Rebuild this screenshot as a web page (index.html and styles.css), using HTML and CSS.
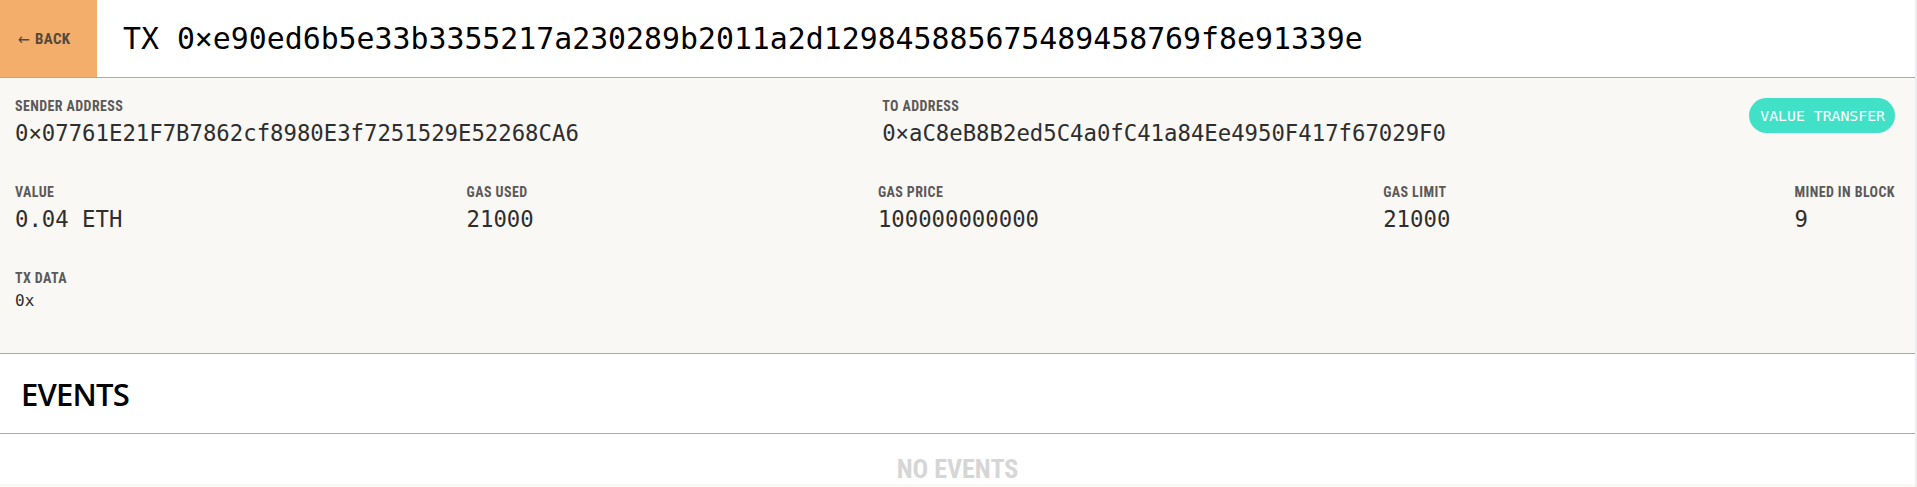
FILE: index.html
```html
<!DOCTYPE html>
<html lang="en">
<head>
<meta charset="utf-8">
<title>Transaction</title>
<link rel="stylesheet" href="styles.css">
</head>
<body>
<div class="app">
  <main class="page">
    <header class="topbar">
      <button class="back"><span class="arrow">←</span><span class="back-text">BACK</span></button>
      <h1 class="tx-title">TX 0×e90ed6b5e33b3355217a230289b2011a2d129845885675489458769f8e91339e</h1>
    </header>

    <section class="details">
      <div class="row">
        <div class="field">
          <div class="label">SENDER ADDRESS</div>
          <div class="value">0×07761E21F7B7862cf8980E3f7251529E52268CA6</div>
        </div>
        <div class="field">
          <div class="label">TO ADDRESS</div>
          <div class="value">0×aC8eB8B2ed5C4a0fC41a84Ee4950F417f67029F0</div>
        </div>
        <div class="badge">VALUE TRANSFER</div>
      </div>
      <div class="row">
        <div class="field">
          <div class="label">VALUE</div>
          <div class="value">0.04 ETH</div>
        </div>
        <div class="field">
          <div class="label">GAS USED</div>
          <div class="value">21000</div>
        </div>
        <div class="field">
          <div class="label">GAS PRICE</div>
          <div class="value">100000000000</div>
        </div>
        <div class="field">
          <div class="label">GAS LIMIT</div>
          <div class="value">21000</div>
        </div>
        <div class="field">
          <div class="label">MINED IN BLOCK</div>
          <div class="value">9</div>
        </div>
      </div>
      <div class="row">
        <div class="field">
          <div class="label">TX DATA</div>
          <div class="value small">0x</div>
        </div>
      </div>
    </section>

    <section class="events-head">
      <h2>EVENTS</h2>
    </section>
    <section class="events-list">
      <div class="empty">NO EVENTS</div>
    </section>
  </main>
  <div class="scrollbar"></div>
</div>
</body>
</html>
```

FILE: styles.css
```css
* { box-sizing: border-box; }

html, body {
  margin: 0;
  padding: 0;
  height: 100%;
}

body {
  background: #faf8f5;
  font-family: Roboto, "Liberation Sans", Arial, sans-serif;
  overflow: hidden;
}

.app {
  display: flex;
  min-height: 100%;
}

.page {
  flex: 1;
  min-width: 0;
  background: #faf8f5;
}

.scrollbar {
  width: 2px;
  background: #eeedf3;
}

/* Header */
.topbar {
  display: flex;
  align-items: center;
  height: 78px;
  background: #ffffff;
  border-bottom: 1px solid #aaaaaa;
}

.back {
  display: flex;
  align-items: center;
  gap: 5px;
  width: 97px;
  height: 100%;
  margin: 0;
  padding: 0 0 0 18px;
  border: 0;
  background: #f2ae6a;
  color: #55483c;
  font-family: Roboto, "Liberation Sans", Arial, sans-serif;
  font-stretch: 75%;
  font-weight: bold;
  font-size: 15px;
}

.back .arrow {
  font-family: "DejaVu Sans", sans-serif;
  font-weight: normal;
  font-size: 16px;
  position: relative;
  top: 1px;
}

.back-text {
  letter-spacing: 0.3px;
}

.tx-title {
  margin: 0 0 0 26px;
  font-family: "DejaVu Sans Mono", monospace;
  font-weight: normal;
  font-size: 29.85px;
  line-height: 36px;
  color: #000000;
  white-space: nowrap;
}

/* Details */
.details {
  display: flex;
  flex-direction: column;
  gap: 37px;
  padding: 20px 20px 42px 15px;
  background: #faf8f5;
  border-bottom: 1px solid #aaaaaa;
}

.row {
  display: flex;
  justify-content: space-between;
  align-items: flex-start;
}

.label {
  font-family: Roboto, "Liberation Sans", Arial, sans-serif;
  font-stretch: 87.5%;
  letter-spacing: 0.4px;
  font-size: 14px;
  line-height: 16px;
  font-weight: bold;
  color: #5a5a5a;
  white-space: nowrap;
}

.value {
  margin-top: 5px;
  font-family: "DejaVu Sans Mono", monospace;
  font-size: 22.3px;
  line-height: 28px;
  color: #2e2e2e;
  white-space: nowrap;
}

.value.small {
  font-size: 16px;
  line-height: 20px;
}

.badge {
  height: 35px;
  padding: 0 10px 0 11px;
  border-radius: 18px;
  background: #41e1c8;
  color: #ffffff;
  font-family: "DejaVu Sans Mono", monospace;
  font-size: 14.8px;
  line-height: 35px;
  white-space: nowrap;
}

/* Events */
.events-head {
  background: #ffffff;
  padding: 22px 21px 21px;
  border-bottom: 1px solid #aaaaaa;
}

.events-head h2 {
  margin: 0;
  font-family: "Open Sans", "Liberation Sans", sans-serif;
  font-stretch: 93%;
  letter-spacing: -0.8px;
  font-size: 31px;
  line-height: 36px;
  font-weight: 600;
  color: #000000;
}

.events-list {
  background: #ffffff;
  height: 50px;
  padding-top: 20px;
  overflow: hidden;
}

.empty {
  text-align: center;
  font-family: Roboto, "Liberation Sans", Arial, sans-serif;
  font-stretch: 75%;
  font-size: 26px;
  line-height: 30px;
  font-weight: bold;
  color: #d6d6d6;
}
```
